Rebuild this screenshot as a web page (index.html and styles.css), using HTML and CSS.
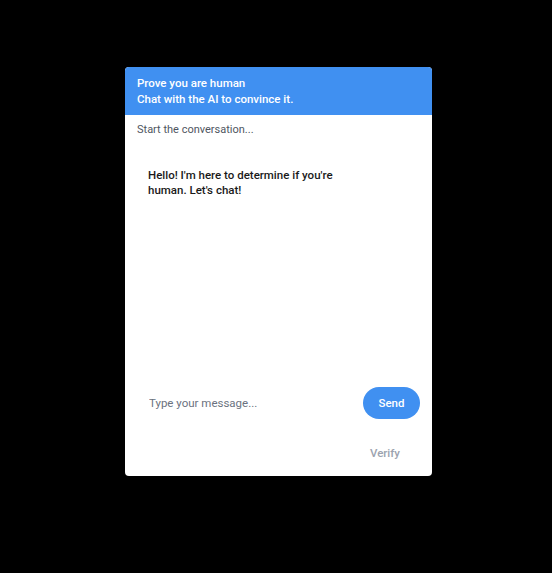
FILE: index.html
```html
<!DOCTYPE html>
<html>
<head>
<meta charset="utf-8">
<link rel="stylesheet" href="styles.css">
</head>
<body>
<div class="stage">
  <div class="card">
    <div class="header">
      <div class="title">Prove you are human</div>
      <div class="subtitle">Chat with the AI to convince it.</div>
    </div>
    <div class="hint">Start the conversation...</div>
    <div class="messages">
      <div class="msg">Hello! I'm here to determine if you're human. Let's chat!</div>
    </div>
    <div class="composer">
      <input class="input" type="text" placeholder="Type your message...">
      <button class="send">Send</button>
    </div>
    <div class="footer">
      <button class="verify">Verify</button>
    </div>
  </div>
</div>
</body>
</html>
```
FILE: styles.css
```css
html, body {
  margin: 0;
  padding: 0;
  background: #000;
}
.stage {
  width: 552px;
  height: 573px;
  padding-top: 67px;
  padding-left: 125px;
  box-sizing: border-box;
}
.card {
  width: 307px;
  height: 409px;
  background: #fff;
  border-radius: 4px;
  overflow: hidden;
  display: flex;
  flex-direction: column;
  font-family: Roboto, "Noto Sans", sans-serif;
}
.header {
  background: #4090f1;
  color: #fff;
  padding: 8px 12px;
  font-size: 11.5px;
  line-height: 16px;
  font-weight: 500;
}
.hint {
  padding: 7px 12px 0;
  font-size: 11px;
  line-height: 16px;
  color: #4f5661;
}
.messages {
  flex: 1;
  padding: 30px 23px 0;
}
.msg {
  font-size: 11.5px;
  line-height: 15px;
  font-weight: 500;
  color: #1a1a1a;
  max-width: 200px;
}
.composer {
  display: flex;
  align-items: center;
  padding: 0 12px 0 24px;
  gap: 8px;
}
.input {
  flex: 1;
  border: none;
  outline: none;
  font-family: inherit;
  font-size: 11.5px;
  padding: 0;
  height: 32px;
  color: #333;
  background: transparent;
}
.input::placeholder {
  color: #6b7280;
}
.send {
  width: 57px;
  height: 32px;
  border: none;
  border-radius: 16px;
  background: #4090f1;
  color: #fff;
  font-family: inherit;
  font-size: 11.5px;
  font-weight: 500;
  padding: 0;
}
.footer {
  display: flex;
  justify-content: flex-end;
  padding: 26px 32px 15px 0;
}
.verify {
  border: none;
  background: none;
  padding: 0;
  font-family: inherit;
  font-size: 11.5px;
  line-height: 16px;
  color: #9ca3af;
  font-weight: 500;
}
```
